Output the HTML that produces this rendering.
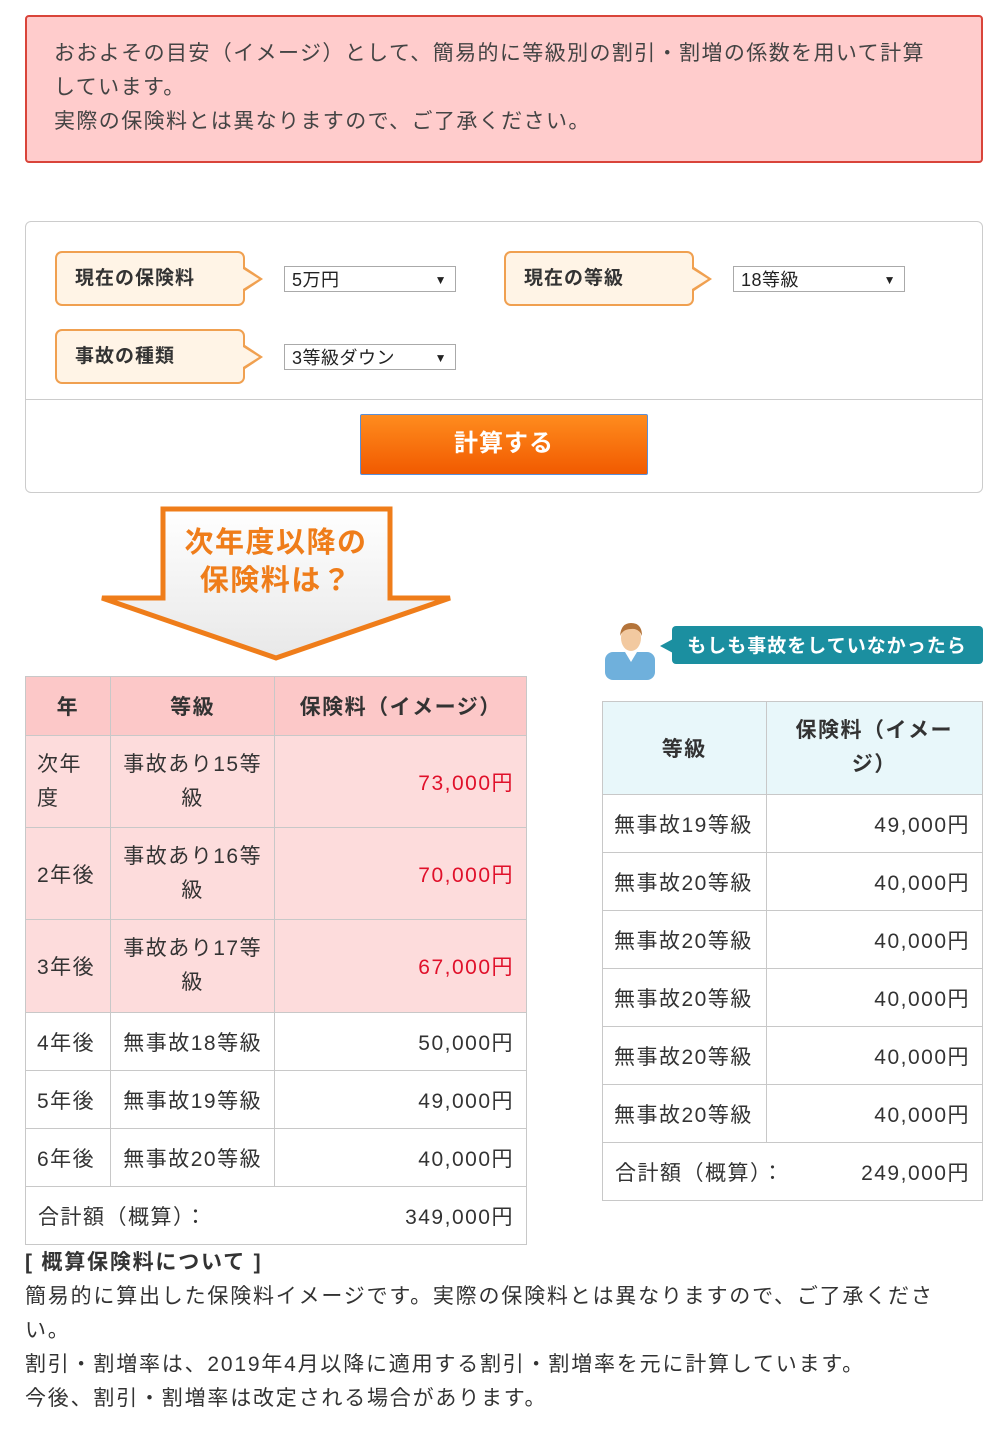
<!DOCTYPE html>
<html><head><meta charset="utf-8"><style>
*{box-sizing:border-box;margin:0;padding:0}
body{width:1000px;height:1433px;background:#fff;position:relative;font-family:"Liberation Sans","Noto Sans CJK JP",sans-serif;color:#333;font-size:21px;letter-spacing:1.5px}
.a{position:absolute}
.notice{left:25px;top:15px;width:958px;height:148px;background:#ffcccc;border:2px solid #d9443a;border-radius:4px;padding:20px 27px;line-height:34px;font-size:21px;color:#444;letter-spacing:1.4px}
.form{left:25px;top:221px;width:958px;height:272px;border:1px solid #ccc;border-radius:6px}
.lbl{width:190px;height:55px;background:#fff4e6;border:2px solid #f0a050;border-radius:7px;font-weight:bold;font-size:19px;padding-left:18px;line-height:51px;color:#333;letter-spacing:1px}
.lbl:after{content:"";position:absolute;right:-20px;top:14px;border-left:18px solid #f0a050;border-top:12px solid transparent;border-bottom:12px solid transparent}
.lbl:before{content:"";position:absolute;right:-16px;top:16px;border-left:16px solid #fff4e6;border-top:10px solid transparent;border-bottom:10px solid transparent;z-index:1}
.sel{width:172px;height:26px;border:1px solid #aaa;background:#fff;font-size:18px;padding-left:7px;line-height:26px;color:#222;letter-spacing:0.5px}
.sel:after{content:"▼";position:absolute;right:8px;top:0;font-size:12px}
.btn{left:360px;top:414px;width:288px;height:61px;border:1px solid #5a8fd8;background:linear-gradient(#ff8c1e,#f15a00);color:#fff;font-weight:bold;font-size:24px;text-align:center;line-height:58px;letter-spacing:1px;border-radius:2px}
table{position:absolute;border-collapse:collapse}
td,th{border:1px solid #c8c8c8;font-size:21px;color:#333}
th{font-weight:bold}
.lt th{background:#fcc8c8}
.lt tr.p td{background:#fddcdc}
.rt th{background:#e8f7fa}
.r{text-align:right;padding-right:12px}
.red{color:#e0102a}
.tot{padding:0 12px}
.tot span{float:right}
.foot{left:25px;top:1246px;line-height:34px;font-size:21px;color:#333;letter-spacing:1.8px}
</style></head><body>
<div class="a notice">おおよその目安（イメージ）として、簡易的に等級別の割引・割増の係数を用いて計算<br>しています。<br>実際の保険料とは異なりますので、ご了承ください。</div>
<div class="a form"></div>
<div class="a" style="left:26px;top:399px;width:956px;height:1px;background:#ccc"></div>
<div class="a lbl" style="left:55px;top:251px">現在の保険料</div>
<div class="a sel" style="left:284px;top:266px">5万円</div>
<div class="a lbl" style="left:504px;top:251px">現在の等級</div>
<div class="a sel" style="left:733px;top:266px">18等級</div>
<div class="a lbl" style="left:55px;top:329px">事故の種類</div>
<div class="a sel" style="left:284px;top:344px">3等級ダウン</div>
<div class="a btn">計算する</div>
<svg class="a" style="left:95px;top:500px" width="370" height="170">
<defs><linearGradient id="g" x1="0" y1="0" x2="0" y2="1"><stop offset="0" stop-color="#fff"/><stop offset="1" stop-color="#e8e8e8"/></linearGradient></defs>
<polygon points="68,9 295,9 295,98 355,98 181,158 7,98 68,98" fill="url(#g)" stroke="#ef7d1a" stroke-width="5" stroke-linejoin="miter"/>
<text x="181" y="52" text-anchor="middle" font-size="29" font-weight="bold" fill="#ef7d1a" font-family="Liberation Sans,Noto Sans CJK JP,sans-serif">次年度以降の</text>
<text x="181" y="90" text-anchor="middle" font-size="29" font-weight="bold" fill="#ef7d1a" font-family="Liberation Sans,Noto Sans CJK JP,sans-serif">保険料は？</text>
</svg>
<svg class="a" style="left:603px;top:620px" width="56" height="60">
<rect x="2" y="32" width="50" height="28" rx="8" fill="#6fb0dc"/>
<path d="M22 32 L28 42 L34 32Z" fill="#fff"/>
<ellipse cx="28" cy="18" rx="10" ry="13" fill="#f2c9a0"/>
<path d="M17 16 Q18 3 28 3 Q39 3 39 16 Q36 8 28 9 Q20 9 17 16Z" fill="#b4743a"/>
</svg>
<svg class="a" style="left:660px;top:626px" width="323" height="40">
<rect x="12" y="0" width="311" height="38" rx="4" fill="#1b8fa0"/>
<polygon points="0,20 13,13 13,27" fill="#1b8fa0"/>
<text x="167" y="26" text-anchor="middle" font-size="19" font-weight="bold" fill="#fff" letter-spacing="1" font-family="Liberation Sans,Noto Sans CJK JP,sans-serif">もしも事故をしていなかったら</text>
</svg>
<table class="lt" style="left:25px;top:676px;width:502px">
<colgroup><col style="width:85px"><col style="width:165px"><col style="width:252px"></colgroup>
<tr style="height:59px"><th>年</th><th>等級</th><th>保険料（イメージ）</th></tr>
<tr class="p" style="height:92px"><td style="padding-left:11px;line-height:34px">次年<br>度</td><td style="text-align:center;line-height:34px">事故あり15等<br>級</td><td class="r red">73,000円</td></tr>
<tr class="p" style="height:92px"><td style="padding-left:11px">2年後</td><td style="text-align:center;line-height:34px">事故あり16等<br>級</td><td class="r red">70,000円</td></tr>
<tr class="p" style="height:93px"><td style="padding-left:11px">3年後</td><td style="text-align:center;line-height:34px">事故あり17等<br>級</td><td class="r red">67,000円</td></tr>
<tr style="height:58px"><td style="padding-left:11px">4年後</td><td style="text-align:center">無事故18等級</td><td class="r">50,000円</td></tr>
<tr style="height:58px"><td style="padding-left:11px">5年後</td><td style="text-align:center">無事故19等級</td><td class="r">49,000円</td></tr>
<tr style="height:58px"><td style="padding-left:11px">6年後</td><td style="text-align:center">無事故20等級</td><td class="r">40,000円</td></tr>
<tr style="height:58px"><td colspan="3" class="tot">合計額（概算）：<span>349,000円</span></td></tr>
</table>
<table class="rt" style="left:602px;top:701px;width:381px">
<colgroup><col style="width:164px"><col style="width:217px"></colgroup>
<tr style="height:93px"><th>等級</th><th style="line-height:34px">保険料（イメー<br>ジ）</th></tr>
<tr style="height:58px"><td style="padding-left:11px">無事故19等級</td><td class="r">49,000円</td></tr>
<tr style="height:58px"><td style="padding-left:11px">無事故20等級</td><td class="r">40,000円</td></tr>
<tr style="height:58px"><td style="padding-left:11px">無事故20等級</td><td class="r">40,000円</td></tr>
<tr style="height:58px"><td style="padding-left:11px">無事故20等級</td><td class="r">40,000円</td></tr>
<tr style="height:58px"><td style="padding-left:11px">無事故20等級</td><td class="r">40,000円</td></tr>
<tr style="height:58px"><td style="padding-left:11px">無事故20等級</td><td class="r">40,000円</td></tr>
<tr style="height:58px"><td colspan="2" class="tot">合計額（概算）：<span>249,000円</span></td></tr>
</table>
<div class="a foot"><b>[ 概算保険料について ]</b><br>簡易的に算出した保険料イメージです。実際の保険料とは異なりますので、ご了承くださ<br>い。<br>割引・割増率は、2019年4月以降に適用する割引・割増率を元に計算しています。<br>今後、割引・割増率は改定される場合があります。</div>
</body></html>
